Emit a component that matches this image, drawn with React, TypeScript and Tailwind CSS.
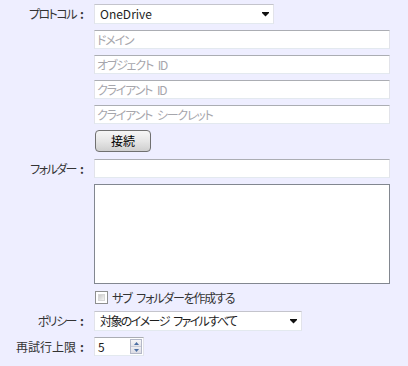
import React from "react";

function Label({ text, tight = true }: { text: string; tight?: boolean }) {
  return (
    <div className="w-[94px] shrink-0 flex justify-end items-center pr-[9px] text-[#333]">
      <span className={tight ? "tracking-[-1.5px]" : ""}>{text}</span>
      <span className="w-[6px] ml-[3px] text-center font-bold">:</span>
    </div>
  );
}

function Arrow() {
  return (
    <svg width="7" height="5" viewBox="0 0 7 5" className="block">
      <path d="M0 0H7V1L3.5 4.5L0 1Z" fill="#111" />
    </svg>
  );
}

function TextBox({ placeholder, mt }: { placeholder?: string; mt: string }) {
  return (
    <div className={`flex ${mt}`}>
      <div className="w-[94px] shrink-0" />
      <div className="w-[296px] h-[19px] bg-white border border-t-[#abadb3] border-x-[#e2e3ea] border-b-[#e3e9ef] pl-[2px] leading-[17px] text-[#a6a6ac] tracking-[-1.2px] whitespace-pre overflow-hidden">
        {placeholder}
      </div>
    </div>
  );
}

export default function App() {
  return (
    <div className="w-[408px] h-[366px] bg-[#eeeeff] pt-[4px] text-[12px] leading-[16px] text-[#1e1e1e] font-['Noto_Sans_CJK_JP',sans-serif] [font-feature-settings:'palt'] overflow-hidden">
      {/* Protocol */}
      <div className="flex items-center h-[20px]">
        <Label text="プロトコル" />
        <div className="w-[180px] h-[20px] bg-white border border-t-[#c4c4cc] border-x-[#e2e3ea] border-b-[#e3e9ef] pl-[5px] pr-[4px] flex items-center justify-between">
          <span>OneDrive</span>
          <Arrow />
        </div>
      </div>

      <TextBox placeholder="ドメイン" mt="mt-[6px]" />
      <TextBox placeholder={"オブジェクト\u2002ID"} mt="mt-[6px]" />
      <TextBox placeholder={"クライアント\u2002ID"} mt="mt-[6px]" />
      <TextBox placeholder={"クライアント\u2002シークレット"} mt="mt-[6px]" />

      {/* Connect button */}
      <div className="flex mt-[6px]">
        <div className="w-[95px] shrink-0" />
        <div className="w-[56px] h-[22px] rounded-[4px] border border-[#707070] bg-gradient-to-b from-[#f6f6f6] via-[#e6e6e6] to-[#cfcfcf] flex items-center justify-center text-black">
          接続
        </div>
      </div>

      {/* Folder */}
      <div className="flex items-center mt-[7px] h-[19px]">
        <Label text="フォルダー" />
        <div className="w-[296px] h-[19px] bg-white border border-t-[#abadb3] border-x-[#e2e3ea] border-b-[#e3e9ef]" />
      </div>

      {/* Textarea */}
      <div className="flex mt-[6px]">
        <div className="w-[94px] shrink-0" />
        <div className="w-[296px] h-[100px] bg-white border border-[#828790]" />
      </div>

      {/* Checkbox */}
      <div className="flex items-center mt-[7px] h-[13px]">
        <div className="w-[95px] shrink-0" />
        <div className="w-[13px] h-[13px] border border-[#8e8f8f] bg-white p-[2px]">
          <div className="w-full h-full bg-gradient-to-br from-[#cbcbcb] to-[#f4f4f4] border border-[#d8d8d8]" />
        </div>
        <span className="ml-[4px] text-[#333] tracking-[-1.2px] whitespace-pre">{"サブ\u2002フォルダーを作成する"}</span>
      </div>

      {/* Policy */}
      <div className="flex items-center mt-[7px] h-[20px]">
        <Label text="ポリシー" />
        <div className="w-[208px] h-[20px] bg-white border border-t-[#c4c4cc] border-x-[#e2e3ea] border-b-[#e3e9ef] pl-[5px] pr-[4px] flex items-center justify-between">
          <span className="whitespace-pre tracking-[-1.6px]">{"対象のイメージ\u2002ファイルすべて"}</span>
          <Arrow />
        </div>
      </div>

      {/* Retry limit */}
      <div className="flex items-center mt-[6px] h-[19px]">
        <Label text="再試行上限" tight={false} />
        <div className="w-[50px] h-[19px] bg-white border border-t-[#abadb3] border-x-[#e2e3ea] border-b-[#e3e9ef] pl-[3px] pr-[1px] flex items-center justify-between">
          <span>5</span>
          <div className="w-[12px] h-[15px] border border-[#b4b8c8] flex flex-col">
            <div className="flex-1 flex items-center justify-center bg-gradient-to-b from-[#f6f6f8] to-[#e4e4ea] border-b border-[#c8ccd8]">
              <svg width="5" height="3" viewBox="0 0 5 3"><path d="M2.5 0L5 3H0Z" fill="#4d6fa3" /></svg>
            </div>
            <div className="flex-1 flex items-center justify-center bg-gradient-to-b from-[#eeeef2] to-[#dcdce4]">
              <svg width="5" height="3" viewBox="0 0 5 3"><path d="M0 0H5L2.5 3Z" fill="#4d6fa3" /></svg>
            </div>
          </div>
        </div>
      </div>
    </div>
  );
}
